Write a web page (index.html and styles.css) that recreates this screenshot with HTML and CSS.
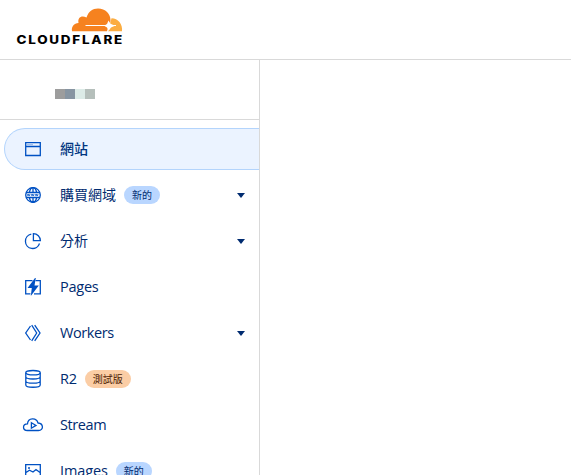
FILE: index.html
```
<!DOCTYPE html>
<html lang="zh-Hant">
<head>
<meta charset="utf-8">
<title>Cloudflare</title>
<link rel="stylesheet" href="styles.css">
</head>
<body>
<header class="header">
  <svg class="logo" width="108" height="40" viewBox="0 0 108 40" role="img" aria-label="Cloudflare">
    <path fill="#f6821f" d="M56 25.200C55.200 20.500 58 17.500 62.500 17C61.500 12 65 9 70.500 11.500C72.500 5.500 76.500 2.500 82 2.500C89.500 2.500 94.500 8 94.500 14C94.500 19 92 21.500 91 25.200Z"/>
    <path fill="#fbad41" d="M95.500 12.200C101.500 12 107 18 106 25.200H92L94 18Z"/>
    <path stroke="#fff" stroke-width="1" d="M69.500 19.500H100"/>
    <path fill="#fff" d="M92.500 14.500L94.500 17.800L99 19.700L95 21.500L92.500 25L91 21.500L88 19.700L91 18Z"/>
    <text class="wordmark" x="0.500" y="38" textLength="107.500" lengthAdjust="spacingAndGlyphs">CLOUDFLARE</text>
  </svg>
</header>
<div class="layout">
  <aside class="sidebar">
    <div class="account"><span class="mosaic"><i class="m1"></i><i class="m2"></i><i class="m3"></i><i class="m4"></i></span></div>
    <nav class="nav">
      <a class="item active">
        <svg class="icon" viewBox="0 0 20 20"><path d="M2.700 3.700H17.300V16.500H2.700ZM2.700 7.500H17.300"/><path class="thin" d="M4.500 5.600H5.500M6.500 5.600H7.500M8.500 5.600H9.500"/></svg>
        <span class="label cjk">網站</span>
      </a>
      <a class="item">
        <svg class="icon" viewBox="0 0 20 20"><circle cx="10" cy="10" r="7.300"/><path d="M10 2.700V7.500M10 12.500V17.300M6.300 7.500C7 4.500 8.500 2.700 10 2.700S13 4.500 13.700 7.500M6.300 12.500C7 15.500 8.500 17.300 10 17.300S13 15.500 13.700 12.500M3.200 7.500H16.800M3.200 12.500H16.800"/><path class="thin" d="M4.300 9L5 11L5.700 9L6.400 11L7.100 9M8.300 9L9 11L9.700 9L10.400 11L11.100 9M12.300 9L13 11L13.700 9L14.400 11L15.100 9"/></svg>
        <span class="label cjk">購買網域</span><span class="badge">新的</span><span class="caret"></span>
      </a>
      <a class="item">
        <svg class="icon" viewBox="0 0 20 20"><path d="M8.300 3.200A7.200 7.200 0 1 0 16.500 12.500"/><path d="M10.400 2.700V9.700H17.400A7 7 0 0 0 10.400 2.700Z"/></svg>
        <span class="label cjk">分析</span><span class="caret"></span>
      </a>
      <a class="item">
        <svg class="icon" viewBox="0 0 20 20"><path d="M9.500 3.700H2.700V16.800H7.500M12.500 3.700H17.300V16.800H11"/><path class="solid" d="M12 1L4.500 11H8.800L7.800 19L15.800 8.500H11.500L12.800 1Z"/></svg>
        <span class="label latin">Pages</span>
      </a>
      <a class="item">
        <svg class="icon" viewBox="0 0 20 20"><path d="M7.500 3L2.700 10L7.500 17M8.700 2.200L13.700 10L8.700 17.800M11.700 2.200L17 10L11.700 17.800"/></svg>
        <span class="label latin workers">Workers</span><span class="caret"></span>
      </a>
      <a class="item">
        <svg class="icon" viewBox="0 0 20 20"><ellipse cx="10" cy="3.700" rx="7.200" ry="2.200"/><path d="M2.800 3.700V16C2.800 19 17.200 19 17.200 16V3.700M2.800 7.800C2.800 10.700 17.200 10.700 17.200 7.800M2.800 11.900C2.800 14.800 17.200 14.800 17.200 11.900"/></svg>
        <span class="label latin">R2</span><span class="badge beta">測試版</span>
      </a>
      <a class="item">
        <svg class="icon" viewBox="0 0 20 20"><path d="M4.500 15.500C-0.800 15.500-0.800 9 4.500 8.800C5 2.500 13.500 2.200 15 8C20.800 8.500 20.800 15.500 15.500 15.500Z"/><path d="M8.400 7.700L13 10.400L8.400 13.200Z"/></svg>
        <span class="label latin workers">Stream</span>
      </a>
      <a class="item">
        <svg class="icon" viewBox="0 0 20 20"><path d="M2.700 3.700H17.300V16.500H2.700ZM3 11.500L6.500 9.200L10 11L13 8.500L17 11.500"/><circle class="solid" cx="6" cy="7" r="1"/></svg>
        <span class="label latin images">Images</span><span class="badge">新的</span>
      </a>
    </nav>
  </aside>
  <main class="content"></main>
</div>
</body>
</html>
```
FILE: styles.css
```
* { box-sizing: border-box; }
body {
  margin: 0;
  height: 475px;
  overflow: hidden;
  background: #fff;
  color: #002b70;
  font-family: "Noto Sans", "Noto Sans CJK TC", sans-serif;
}
.header {
  height: 60px;
  padding: 6px 0 0 16px;
  border-bottom: 1px solid #d9d9d9;
}
.logo { display: block; }
.wordmark {
  font: 800 11.5px Inter, sans-serif;
  letter-spacing: 1.5px;
  fill: #000;
}
.layout { display: flex; height: 415px; }
.sidebar {
  width: 260px;
  flex: none;
  border-right: 1px solid #d9d9d9;
}
.content { flex: 1; }
.account {
  height: 60px;
  padding: 29px 0 0 55px;
  border-bottom: 1px solid #d9d9d9;
}
.mosaic { display: flex; }
.mosaic i { width: 10px; height: 10px; }
.m1 { background: #9d9d9d; }
.m2 { background: #8795a2; }
.m3 { background: #dcebe7; }
.m4 { background: #b5bfbb; }
.nav {
  display: flex;
  flex-direction: column;
  gap: 4px;
  height: 355px;
  padding: 8px 0 0 4px;
  overflow: hidden;
}
.item {
  display: flex;
  flex: none;
  align-items: center;
  height: 42px;
  padding: 0 14px 0 18px;
  border: 1px solid transparent;
  border-right: 0;
  border-radius: 21px 0 0 21px;
}
.active { background: #ebf3ff; border-color: #b3d4fc; }
.icon {
  flex: none;
  width: 20px;
  height: 20px;
  margin-right: 17px;
  overflow: visible;
  fill: none;
  stroke: #0051c3;
  stroke-width: 1.3;
}
.icon .thin { stroke-width: 0.7; }
.icon .solid { fill: #0051c3; stroke: none; }
.label {
  font-size: 14px;
  line-height: 20px;
  white-space: nowrap;
}
.latin {
  font-family: "Open Sans", "Noto Sans", sans-serif;
  font-size: 14.5px;
  letter-spacing: -0.25px;
}
.workers { letter-spacing: -0.4px; }
.images { letter-spacing: -0.1px; }
.cjk {
  margin-bottom: 2px;
  font-family: "Noto Sans CJK TC", sans-serif;
  font-weight: 400;
}
.active .cjk { color: #003681; font-weight: 500; }
.badge {
  height: 18px;
  margin-left: 8px;
  padding: 0 8px;
  border-radius: 9px;
  background: #b9d6ff;
  color: #002b70;
  font: 10px/18px "Noto Sans CJK TC", sans-serif;
}
.beta { background: #fbcda5; color: #4d1b02; }
.caret {
  margin-left: auto;
  border: 4.5px solid transparent;
  border-top: 5px solid #002b70;
  border-bottom: 0;
}
```
